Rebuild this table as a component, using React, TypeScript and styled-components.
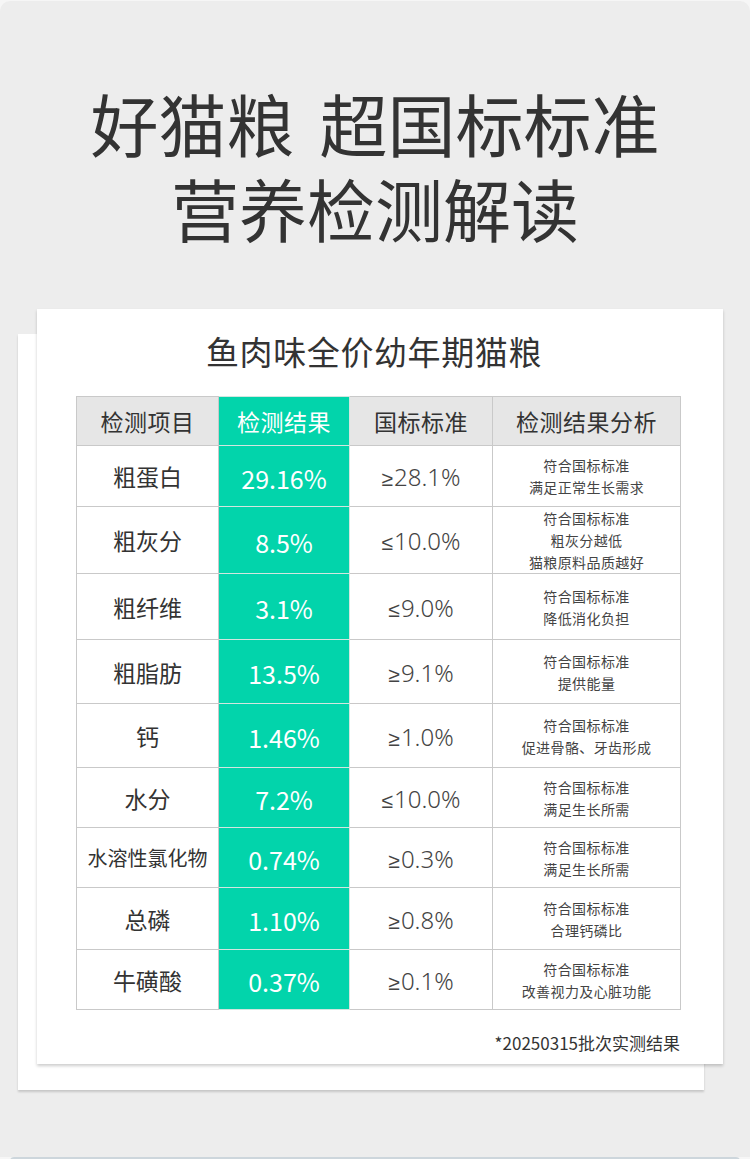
import React from 'react';
import styled, { createGlobalStyle } from 'styled-components';

const GlobalStyle = createGlobalStyle`
  html, body {
    margin: 0;
    padding: 0;
    background: #f6f6f6;
  }
  body {
    font-family: "Noto Sans CJK SC", "Noto Sans", sans-serif;
  }
`;

const colors = {
  panel: '#ededed',
  text: '#333333',
  soft: '#444444',
  green: '#02d4ab',
  headBg: '#e6e6e6',
  line: '#c9c9c9',
  white: '#ffffff',
};

const Page = styled.div`
  width: 750px;
  height: 1159px;
  display: flex;
  flex-direction: column;
  overflow: hidden;
`;

const Panel = styled.div`
  margin-top: 1px;
  height: 1156px;
  flex-shrink: 0;
  background: ${colors.panel};
  border-radius: 10px 10px 0 0;
  padding-top: 79px;
  box-sizing: border-box;
`;

const NextStrip = styled.div`
  margin: 0 10px;
  height: 4px;
  flex-shrink: 0;
  background: #cdd6dc;
  border-radius: 8px 8px 0 0;
`;

const Heading = styled.h1`
  margin: 0;
  font-size: 68px;
  line-height: 85px;
  font-weight: 400;
  color: ${colors.text};
  text-align: center;
  word-spacing: 10px;
`;

const HeadingLine = styled.span`
  display: block;
  height: 85px;
`;

const CardStack = styled.div`
  position: relative;
  width: 686px;
  margin: 59px 0 0 37px;
`;

const BackCard = styled.div`
  position: absolute;
  left: -19px;
  top: 25px;
  width: 686px;
  height: 756px;
  background: ${colors.white};
  box-shadow: 0 2px 2px rgba(0, 0, 0, 0.16);
`;

const FrontCard = styled.div`
  position: relative;
  z-index: 1;
  height: 755px;
  background: ${colors.white};
  box-shadow: 0 2px 3px rgba(0, 0, 0, 0.2);
  padding-top: 22px;
  box-sizing: border-box;
  display: flex;
  flex-direction: column;
`;

const CardTitle = styled.h2`
  margin: 0;
  padding-right: 12px;
  font-size: 33px;
  line-height: 40px;
  font-weight: 400;
  letter-spacing: 0.6px;
  color: ${colors.text};
  text-align: center;
`;

const Table = styled.table`
  margin: 25px 0 0 39px;
  width: 604px;
  border-collapse: collapse;
  table-layout: fixed;
`;

const Row = styled.tr<{ $h: number }>`
  height: ${p => p.$h}px;
`;

const HeadCell = styled.th<{ $accent?: boolean }>`
  padding: 0;
  border: 1px solid ${p => (p.$accent ? '#d2e6df' : colors.line)};
  background: ${p => (p.$accent ? colors.green : colors.headBg)};
  color: ${p => (p.$accent ? colors.white : colors.text)};
  font-size: 23px;
  font-weight: 400;
  letter-spacing: 0.5px;
  text-align: center;
  vertical-align: middle;
`;

const ItemCell = styled.td<{ $size?: number }>`
  padding: 0;
  border: 1px solid ${colors.line};
  color: ${colors.text};
  font-size: ${p => p.$size ?? 23}px;
  text-align: center;
  vertical-align: middle;
`;

const ValueCell = styled.td`
  padding: 3px 0 0;
  border: 1px solid #d2e6df;
  background: ${colors.green};
  color: ${colors.white};
  font-size: 25px;
  font-weight: 400;
  text-align: center;
  vertical-align: middle;
`;

const StandardCell = styled.td`
  padding: 1px 0 0;
  border: 1px solid ${colors.line};
  color: ${colors.soft};
  font-family: "Noto Sans", "Noto Sans CJK SC", sans-serif;
  font-size: 24px;
  font-weight: 300;
  text-align: center;
  vertical-align: middle;
`;

const Symbol = styled.span`
  font-family: "Liberation Sans", sans-serif;
  font-size: 21px;
  margin-right: 1px;
`;

const NoteCell = styled.td`
  padding: 0;
  border: 1px solid ${colors.line};
  color: ${colors.soft};
  font-size: 14px;
  line-height: 22px;
  letter-spacing: 0.4px;
  text-align: center;
  vertical-align: middle;
`;

const Footnote = styled.div`
  margin-top: 23px;
  padding-right: 43px;
  text-align: right;
  font-size: 17px;
  line-height: 20px;
  font-weight: 400;
  color: ${colors.text};
`;

type Item = {
  name: string;
  value: string;
  op: '≥' | '≤';
  standard: string;
  notes: string[];
  h: number;
  size?: number;
};

const items: Item[] = [
  { name: '粗蛋白', value: '29.16%', op: '≥', standard: '28.1%', notes: ['符合国标标准', '满足正常生长需求'], h: 61 },
  { name: '粗灰分', value: '8.5%', op: '≤', standard: '10.0%', notes: ['符合国标标准', '粗灰分越低', '猫粮原料品质越好'], h: 67 },
  { name: '粗纤维', value: '3.1%', op: '≤', standard: '9.0%', notes: ['符合国标标准', '降低消化负担'], h: 66 },
  { name: '粗脂肪', value: '13.5%', op: '≥', standard: '9.1%', notes: ['符合国标标准', '提供能量'], h: 64 },
  { name: '钙', value: '1.46%', op: '≥', standard: '1.0%', notes: ['符合国标标准', '促进骨骼、牙齿形成'], h: 64 },
  { name: '水分', value: '7.2%', op: '≤', standard: '10.0%', notes: ['符合国标标准', '满足生长所需'], h: 60 },
  { name: '水溶性氯化物', value: '0.74%', op: '≥', standard: '0.3%', notes: ['符合国标标准', '满足生长所需'], h: 60, size: 20 },
  { name: '总磷', value: '1.10%', op: '≥', standard: '0.8%', notes: ['符合国标标准', '合理钙磷比'], h: 62 },
  { name: '牛磺酸', value: '0.37%', op: '≥', standard: '0.1%', notes: ['符合国标标准', '改善视力及心脏功能'], h: 60 },
];

export default function App() {
  return (
    <Page>
      <GlobalStyle />
      <Panel>
        <Heading>
          <HeadingLine>好猫粮 超国标标准</HeadingLine>
          <HeadingLine>营养检测解读</HeadingLine>
        </Heading>

        <CardStack>
          <BackCard />
          <FrontCard>
            <CardTitle>鱼肉味全价幼年期猫粮</CardTitle>
            <Table>
              <colgroup>
                <col style={{ width: 142 }} />
                <col style={{ width: 131 }} />
                <col style={{ width: 143 }} />
                <col style={{ width: 188 }} />
              </colgroup>
              <thead>
                <Row $h={49}>
                  <HeadCell>检测项目</HeadCell>
                  <HeadCell $accent>检测结果</HeadCell>
                  <HeadCell>国标标准</HeadCell>
                  <HeadCell>检测结果分析</HeadCell>
                </Row>
              </thead>
              <tbody>
                {items.map(item => (
                  <Row key={item.name} $h={item.h}>
                    <ItemCell $size={item.size}>{item.name}</ItemCell>
                    <ValueCell>{item.value}</ValueCell>
                    <StandardCell>
                      <Symbol>{item.op}</Symbol>
                      {item.standard}
                    </StandardCell>
                    <NoteCell>
                      {item.notes.map(line => (
                        <div key={line}>{line}</div>
                      ))}
                    </NoteCell>
                  </Row>
                ))}
              </tbody>
            </Table>
            <Footnote>*20250315批次实测结果</Footnote>
          </FrontCard>
        </CardStack>
      </Panel>
      <NextStrip />
    </Page>
  );
}
